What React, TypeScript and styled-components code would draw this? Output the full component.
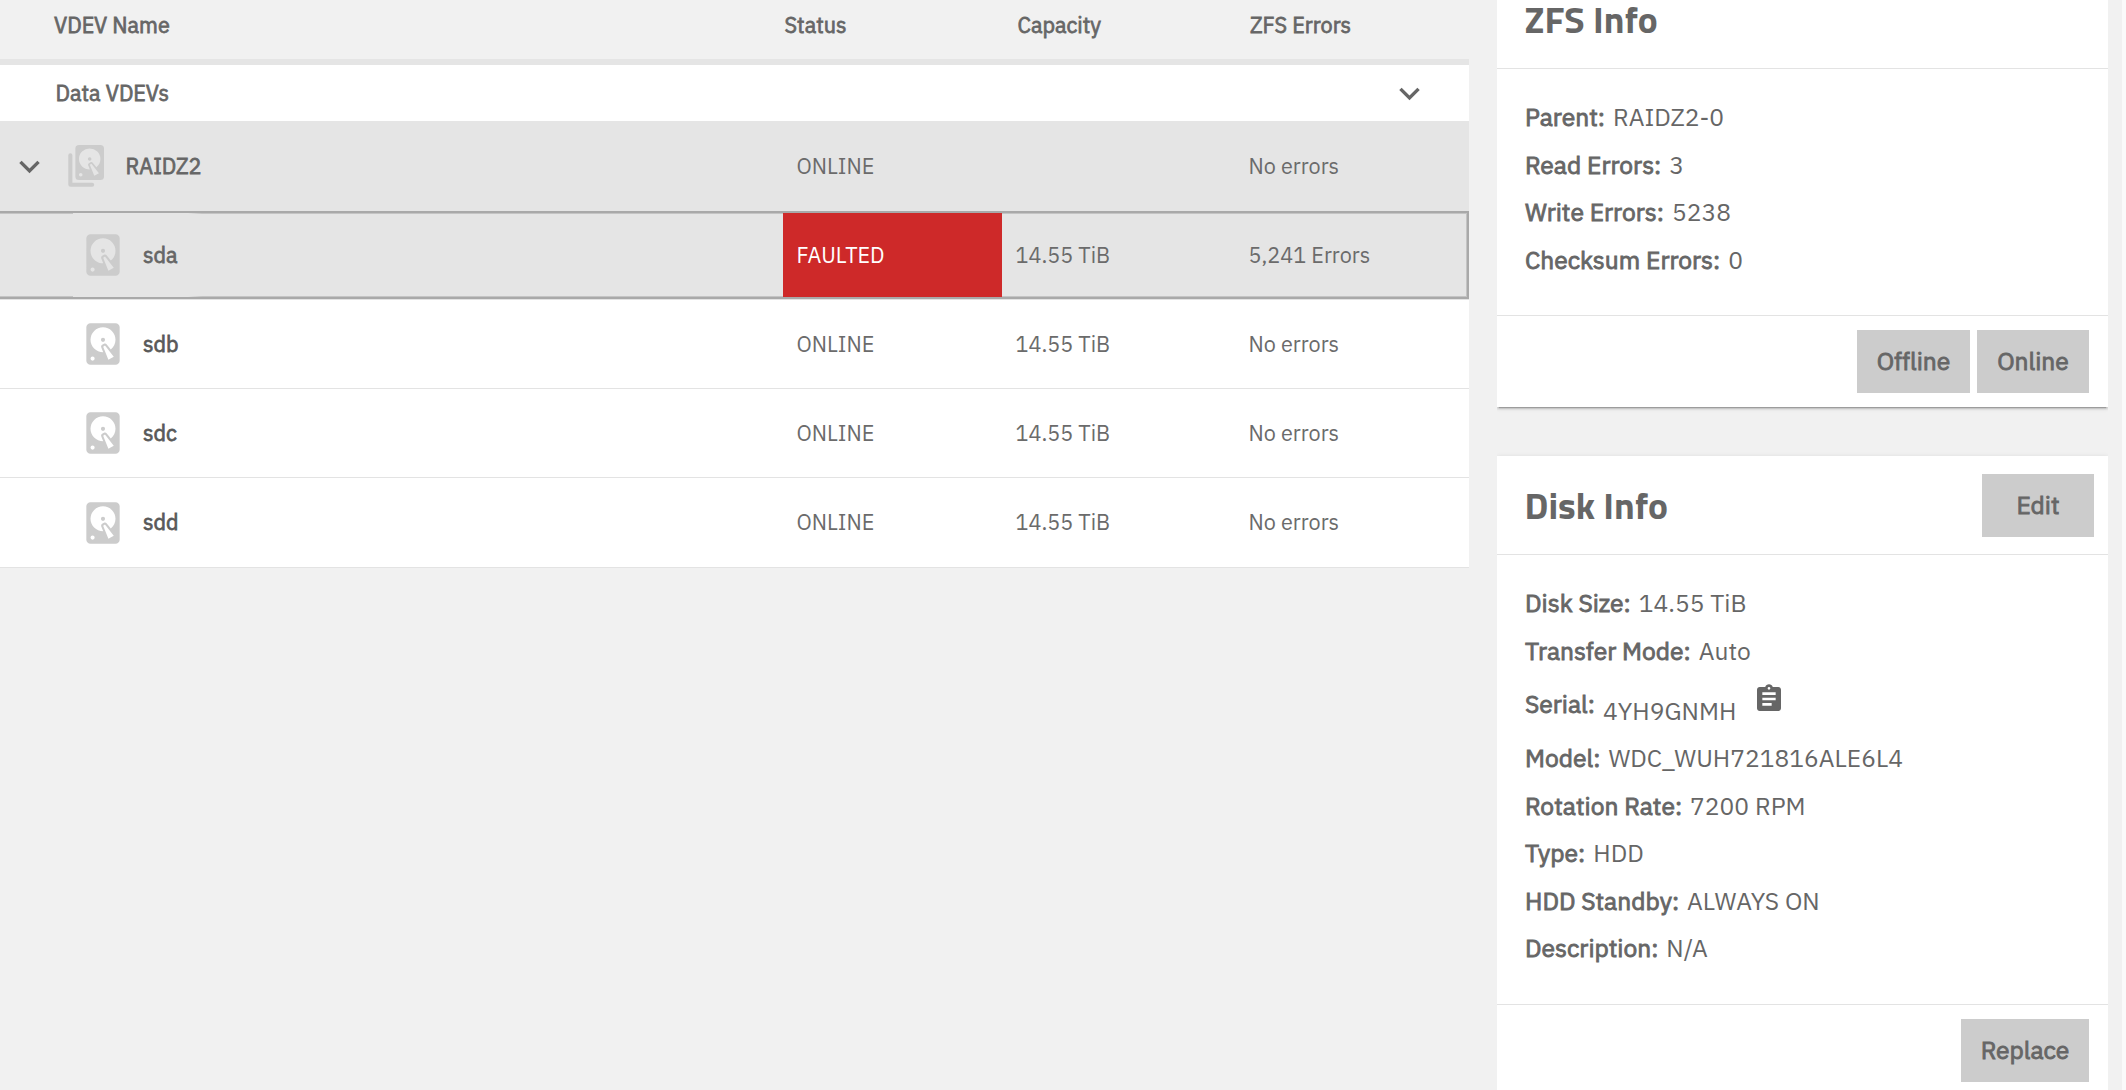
import React from 'react';
import styled, { createGlobalStyle, css } from 'styled-components';

const bodyFont = '"IBM Plex Sans", Roboto, "Liberation Sans", sans-serif';
const titleFont = '"Titillium Web", Roboto, "Liberation Sans", sans-serif';

const GlobalStyle = createGlobalStyle`
  * { box-sizing: border-box; }
  body {
    margin: 0;
    background: #f1f1f1;
    color: #666;
    font-family: ${bodyFont};
  }
`;

const Page = styled.div`
  display: flex;
  height: 1090px;
  overflow: hidden;
  background: #f1f1f1;
`;

const Table = styled.div`
  flex: none;
  width: 1469px;
  margin-right: 28px;
  font-size: 21.6px;
`;

const columns = css`
  display: grid;
  grid-template-columns: 783px 219px 233px 1fr;
`;

const Text = styled.span<{ $strong?: boolean }>`
  display: inline-block;
  padding-bottom: 1px;
  white-space: pre;
  -webkit-text-stroke: ${(p) => (p.$strong ? '0.035em currentColor' : '0')};
`;

const HeaderRow = styled.div`
  ${columns}
  height: 65px;
  border-bottom: 6px solid #e5e5e5;
  line-height: 51px;
`;

const HeaderCell = styled.div<{ $pad: number }>`
  padding-left: ${(p) => p.$pad}px;
`;

const GroupRow = styled.div`
  display: flex;
  align-items: center;
  justify-content: space-between;
  height: 56px;
  padding: 0 39px 0 55.5px;
  background: #fff;
`;

const Row = styled.div<{ $kind: 'parent' | 'leaf' | 'selected'; $height: number }>`
  ${columns}
  height: ${(p) => p.$height}px;
  ${(p) => p.$kind === 'parent' && css`background: #e5e5e5;`}
  ${(p) => p.$kind === 'leaf' && css`
    background: #fff;
    border-bottom: 1px solid #e3e3e3;
  `}
  ${(p) => p.$kind === 'selected' && css`
    margin-bottom: 1px;
    background: #e5e5e5;
    border: 2px solid #a9a9a9;
    border-left: 0;
    box-shadow: 0 1px 0 #e3e3e3, inset 0 1px #c4c4c4, inset 0 -1px #c4c4c4, inset -1px 0 #c4c4c4;
  `}
`;

const NameCell = styled.div<{ $pad: number; $fade?: boolean; $dark?: boolean }>`
  display: flex;
  align-items: center;
  padding-left: ${(p) => p.$pad}px;
  color: ${(p) => (p.$dark ? '#595959' : '#666')};
  ${(p) => p.$fade && css`
    background: linear-gradient(to right, transparent 73px, #e5e5e5 73px, #e5e5e5 188px, transparent 202px);
  `}
`;

const Name = styled(Text)<{ $gap: number }>`
  margin-left: ${(p) => p.$gap}px;
`;

const Cell = styled.div<{ $faulted?: boolean }>`
  display: flex;
  align-items: center;
  padding-left: 13.5px;
  color: ${(p) => (p.$faulted ? '#fff' : '#6b6b6b')};
  background: ${(p) => (p.$faulted ? '#ce2929' : 'transparent')};
`;

const Icon = styled.svg`
  display: block;
  flex: none;
`;

const StackIcon = styled(Icon)`
  margin-left: 18px;
`;

const Sidebar = styled.aside`
  flex: none;
  width: 611px;
  overflow: hidden;
`;

const Track = styled.div`
  width: 4px;
  margin-left: auto;
  background: #fafafa;
`;

const Card = styled.section<{ $lift?: boolean }>`
  margin-top: ${(p) => (p.$lift ? -30 : 49)}px;
  background: #fff;
  box-shadow: 0 3px 1px -2px rgba(0, 0, 0, 0.2), 0 2px 2px 0 rgba(0, 0, 0, 0.14),
    0 1px 5px 0 rgba(0, 0, 0, 0.12);
`;

const CardHeader = styled.header`
  display: flex;
  align-items: center;
  justify-content: space-between;
  height: 99px;
  padding: 0 14px 0 27.5px;
  border-bottom: 1px solid #e3e3e3;
`;

const Title = styled.h3`
  margin: 2px 0 0;
  font-family: ${titleFont};
  font-size: 37.5px;
  font-weight: 700;
  line-height: 1;
`;

const Details = styled.div`
  padding: 24.75px 0 31.25px 28px;
  font-size: 24.6px;
`;

const Detail = styled.div<{ $tall?: boolean }>`
  display: flex;
  align-items: center;
  gap: 8px;
  height: ${(p) => (p.$tall ? 60 : 47.5)}px;
`;

const LowValue = styled(Text)`
  padding-top: 14px;
`;

const ClipboardIcon = styled(Icon)`
  margin: 0 0 12px 9px;
`;

const Actions = styled.footer`
  display: flex;
  justify-content: flex-end;
  gap: 7px;
  height: 92px;
  padding: 14px 19px 0 0;
  border-top: 1px solid #e3e3e3;
`;

const Button = styled.button<{ $width: number }>`
  width: ${(p) => p.$width}px;
  height: 63px;
  padding: 0;
  border: 0;
  background: #ccc;
  color: #666;
  font: 400 24.6px ${bodyFont};
`;

const diskPath =
  'M6,2H18A2,2 0 0,1 20,4V20A2,2 0 0,1 18,22H6A2,2 0 0,1 4,20V4A2,2 0 0,1 6,2M12,4A6,6 0 0,0 6,10C6,13.31 8.69,16 12.1,16L11.22,13.77C10.95,13.29 11.11,12.68 11.59,12.4L12.45,11.9C12.93,11.63 13.54,11.79 13.82,12.27L15.74,14.69C17.12,13.59 18,11.9 18,10A6,6 0 0,0 12,4M12,9A1,1 0 0,1 13,10A1,1 0 0,1 12,11A1,1 0 0,1 11,10A1,1 0 0,1 12,9M7,18A1,1 0 0,0 6,19A1,1 0 0,0 7,20A1,1 0 0,0 8,19A1,1 0 0,0 7,18M12.09,13.27L14.58,19.58L17.17,18.08L12.95,12.77L12.09,13.27Z';

const Disk = () => (
  <Icon width="50" height="50" viewBox="0 0 24 24" fill="#ccc">
    <path d={diskPath} />
  </Icon>
);

const DiskStack = () => (
  <StackIcon width="36" height="42" viewBox="0 0 36 42" fill="#ccc">
    <path d="M0.3 10.3a2 2 0 0 1 2-2h0.1a2 2 0 0 1 2 2V37.8H24.2a2 2 0 0 1 2 2a2 2 0 0 1-2 2H2.8a2.5 2.5 0 0 1-2.5-2.5z" />
    <g transform="translate(0.2 -3.5) scale(1.79 1.75)">
      <path d={diskPath} />
    </g>
  </StackIcon>
);

const Chevron = () => (
  <Icon width="41" height="41" viewBox="0 0 24 24" fill="#666">
    <path d="M16.59 8.59L12 13.17 7.41 8.59 6 10l6 6 6-6z" />
  </Icon>
);

const Clipboard = () => (
  <ClipboardIcon width="32" height="32" viewBox="0 0 24 24" fill="#666">
    <path d="M19 3h-4.18C14.4 1.84 13.3 1 12 1c-1.3 0-2.4.84-2.82 2H5c-1.1 0-2 .9-2 2v14c0 1.1.9 2 2 2h14c1.1 0 2-.9 2-2V5c0-1.1-.9-2-2-2zm-7 0c.55 0 1 .45 1 1s-.45 1-1 1-1-.45-1-1 .45-1 1-1zm2 14H7v-2h7v2zm3-4H7v-2h10v2zm0-4H7V7h10v2z" />
  </ClipboardIcon>
);

type Field = { label: string; value: string; copy?: boolean };

const zfsFields: Field[] = [
  { label: 'Parent:', value: 'RAIDZ2-0' },
  { label: 'Read Errors:', value: '3' },
  { label: 'Write Errors:', value: '5238' },
  { label: 'Checksum Errors:', value: '0' },
];

const diskFields: Field[] = [
  { label: 'Disk Size:', value: '14.55 TiB' },
  { label: 'Transfer Mode:', value: 'Auto' },
  { label: 'Serial:', value: '4YH9GNMH', copy: true },
  { label: 'Model:', value: 'WDC_WUH721816ALE6L4' },
  { label: 'Rotation Rate:', value: '7200 RPM' },
  { label: 'Type:', value: 'HDD' },
  { label: 'HDD Standby:', value: 'ALWAYS ON' },
  { label: 'Description:', value: 'N/A' },
];

const FieldList = ({ fields }: { fields: Field[] }) => (
  <Details>
    {fields.map((f) => (
      <Detail key={f.label} $tall={f.copy}>
        <Text $strong>{f.label}</Text>
        {f.copy ? (
          <>
            <LowValue>{f.value}</LowValue>
            <Clipboard />
          </>
        ) : (
          <Text>{f.value}</Text>
        )}
      </Detail>
    ))}
  </Details>
);

const headers = [
  { title: 'VDEV Name', pad: 54 },
  { title: 'Status', pad: 1.5 },
  { title: 'Capacity', pad: 15.5 },
  { title: 'ZFS Errors', pad: 15 },
];

const disks = [
  { name: 'sda', faulted: true, height: 88 },
  { name: 'sdb', faulted: false, height: 89 },
  { name: 'sdc', faulted: false, height: 89 },
  { name: 'sdd', faulted: false, height: 90 },
];

export default function App() {
  return (
    <>
      <GlobalStyle />
      <Page>
        <Table>
          <HeaderRow>
            {headers.map((h) => (
              <HeaderCell key={h.title} $pad={h.pad}>
                <Text $strong>{h.title}</Text>
              </HeaderCell>
            ))}
          </HeaderRow>
          <GroupRow>
            <Text $strong>Data VDEVs</Text>
            <Chevron />
          </GroupRow>
          <Row $kind="parent" $height={90}>
            <NameCell $pad={9}>
              <Chevron />
              <DiskStack />
              <Name $strong $gap={21.5}>RAIDZ2</Name>
            </NameCell>
            <Cell><Text>ONLINE</Text></Cell>
            <Cell />
            <Cell><Text>No errors</Text></Cell>
          </Row>
          {disks.map((d) => (
            <Row key={d.name} $kind={d.faulted ? 'selected' : 'leaf'} $height={d.height}>
              <NameCell $pad={78} $fade={d.faulted} $dark={!d.faulted}>
                <Disk />
                <Name $strong $gap={15}>{d.name}</Name>
              </NameCell>
              <Cell $faulted={d.faulted}>
                <Text>{d.faulted ? 'FAULTED' : 'ONLINE'}</Text>
              </Cell>
              <Cell><Text>14.55 TiB</Text></Cell>
              <Cell>
                <Text>{d.faulted ? '5,241 Errors' : 'No errors'}</Text>
              </Cell>
            </Row>
          ))}
        </Table>
        <Sidebar>
          <Card $lift>
            <CardHeader>
              <Title>ZFS Info</Title>
            </CardHeader>
            <FieldList fields={zfsFields} />
            <Actions>
              <Button $width={113}><Text $strong>Offline</Text></Button>
              <Button $width={112}><Text $strong>Online</Text></Button>
            </Actions>
          </Card>
          <Card>
            <CardHeader>
              <Title>Disk Info</Title>
              <Button $width={112}><Text $strong>Edit</Text></Button>
            </CardHeader>
            <FieldList fields={diskFields} />
            <Actions>
              <Button $width={128}><Text $strong>Replace</Text></Button>
            </Actions>
          </Card>
        </Sidebar>
        <Track />
      </Page>
    </>
  );
}
